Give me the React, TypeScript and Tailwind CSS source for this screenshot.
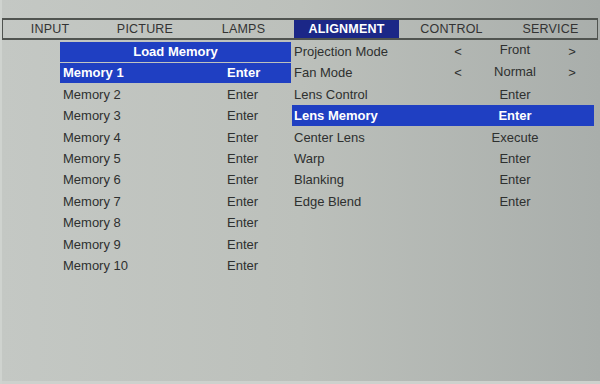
const tabs = [
  { label: "INPUT", w: "w-[94px]" },
  { label: "PICTURE", w: "w-[96px]" },
  { label: "LAMPS", w: "w-[101px]" },
  { label: "ALIGNMENT", w: "w-[105px]", active: true },
  { label: "CONTROL", w: "w-[105px]" },
  { label: "SERVICE", w: "flex-1" },
];

const memories = Array.from({ length: 10 }, (_, i) => `Memory ${i + 1}`);

const alignmentRows = [
  { label: "Projection Mode", value: "Front", arrows: true },
  { label: "Fan Mode", value: "Normal", arrows: true },
  { label: "Lens Control", value: "Enter" },
  { label: "Lens Memory", value: "Enter", selected: true },
  { label: "Center Lens", value: "Execute" },
  { label: "Warp", value: "Enter" },
  { label: "Blanking", value: "Enter" },
  { label: "Edge Blend", value: "Enter" },
];

export default function App() {
  return (
    <div
      className="relative h-[384px] w-[600px] overflow-hidden bg-gradient-to-r from-[#c4c8c4] via-[#bcc0bb] to-[#a9aeab] text-[13px] text-[#2e302f]"
      style={{ fontFamily: '"Liberation Sans", Arial, sans-serif' }}
    >
      <div className="h-[18px]" />

      {/* tab bar */}
      <div className="mx-[2px] flex h-[22px] border-y-2 border-x border-[#505450] text-[12.5px] tracking-[0.2px]">
        {tabs.map((t) => (
          <div
            key={t.label}
            className={`${t.w} flex items-center justify-center pt-[1px] ${
              t.active ? "bg-[#1b2787] font-bold text-white" : "text-[#333]"
            }`}
          >
            {t.label}
          </div>
        ))}
      </div>

      <div className="flex pt-[1px]">
        {/* Load Memory column */}
        <div className="ml-[60px] w-[231px]">
          <div className="flex h-[21.43px] items-center">
            <div className="flex h-[20px] w-full items-center justify-center bg-[#1f3fc2] font-bold text-white">
              Load Memory
            </div>
          </div>
          {memories.map((m, i) => (
            <div key={m} className="flex h-[21.43px] items-center">
              <div
                className={`flex h-[20px] w-full items-center pl-[3px] ${
                  i === 0 ? "bg-[#1f3fc2] font-bold text-white" : ""
                }`}
              >
                <span className="flex-1">{m}</span>
                <span className="w-[64px]">Enter</span>
              </div>
            </div>
          ))}
        </div>

        {/* Alignment column */}
        <div className="ml-[1px] w-[302px]">
          {alignmentRows.map((r) => (
            <div key={r.label} className="flex h-[21.43px] items-center">
              <div
                className={`flex h-[21px] w-full items-center pl-[2px] ${
                  r.selected ? "bg-[#1f3fc2] font-bold text-white" : ""
                }`}
              >
                <span className="w-[154px]">{r.label}</span>
                <span className="w-[20px] text-center">{r.arrows ? "<" : ""}</span>
                <span className={`w-[94px] text-center ${r.arrows ? "-mt-[3px]" : ""}`}>{r.value}</span>
                <span className="w-[20px] text-center">{r.arrows ? ">" : ""}</span>
              </div>
            </div>
          ))}
        </div>
      </div>

      <div className="absolute bottom-0 left-0 h-[3px] w-full bg-[#cdd1cd]" />
      <div className="absolute left-0 top-0 h-full w-[2px] bg-[#cfd3cf]" />
    </div>
  );
}
